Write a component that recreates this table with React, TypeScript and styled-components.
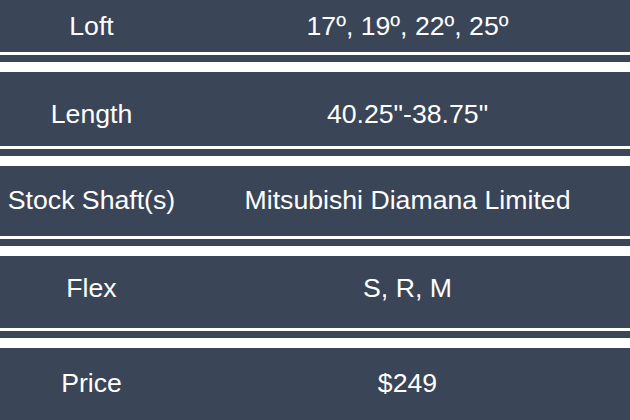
import React from "react";
import styled, { createGlobalStyle } from "styled-components";

const SLATE = "#3a4557";

const Global = createGlobalStyle`
  html, body {
    margin: 0;
    padding: 0;
    background: ${SLATE};
  }
  body {
    font-family: "Liberation Sans", Arial, sans-serif;
  }
`;

const Table = styled.div`
  width: 630px;
  height: 420px;
  overflow: hidden;
  background: ${SLATE};
  display: flex;
  flex-direction: column;
`;

const Row = styled.div<{ $top: number; $bottom: number }>`
  display: grid;
  grid-template-columns: 183px 1fr;
  align-items: center;
  padding-top: ${(p) => p.$top}px;
  padding-bottom: ${(p) => p.$bottom}px;
  background: ${SLATE};
  color: #ffffff;
  font-size: 26.67px;
  line-height: 30px;
`;

const Label = styled.div`
  text-align: center;
  white-space: nowrap;
`;

const Value = styled.div`
  text-align: center;
  white-space: nowrap;
  padding-left: 2px;
`;

const Separator = styled.div`
  height: 7px;
  background: ${SLATE};
  border-top: 3px solid #ffffff;
  border-bottom: 10px solid #ffffff;
`;

const rows = [
  { label: "Loft", value: "17º, 19º, 22º, 25º", top: 11, bottom: 11 },
  { label: "Length", value: "40.25\"-38.75\"", top: 27, bottom: 17 },
  { label: "Stock Shaft(s)", value: "Mitsubishi Diamana Limited", top: 19, bottom: 21 },
  { label: "Flex", value: "S, R, M", top: 17, bottom: 25 },
  { label: "Price", value: "$249", top: 20, bottom: 20 },
];

export default function App() {
  return (
    <>
      <Global />
      <Table>
        {rows.map((r, i) => (
          <React.Fragment key={r.label}>
            <Row $top={r.top} $bottom={r.bottom}>
              <Label>{r.label}</Label>
              <Value>{r.value}</Value>
            </Row>
            {i < rows.length - 1 && <Separator />}
          </React.Fragment>
        ))}
      </Table>
    </>
  );
}
